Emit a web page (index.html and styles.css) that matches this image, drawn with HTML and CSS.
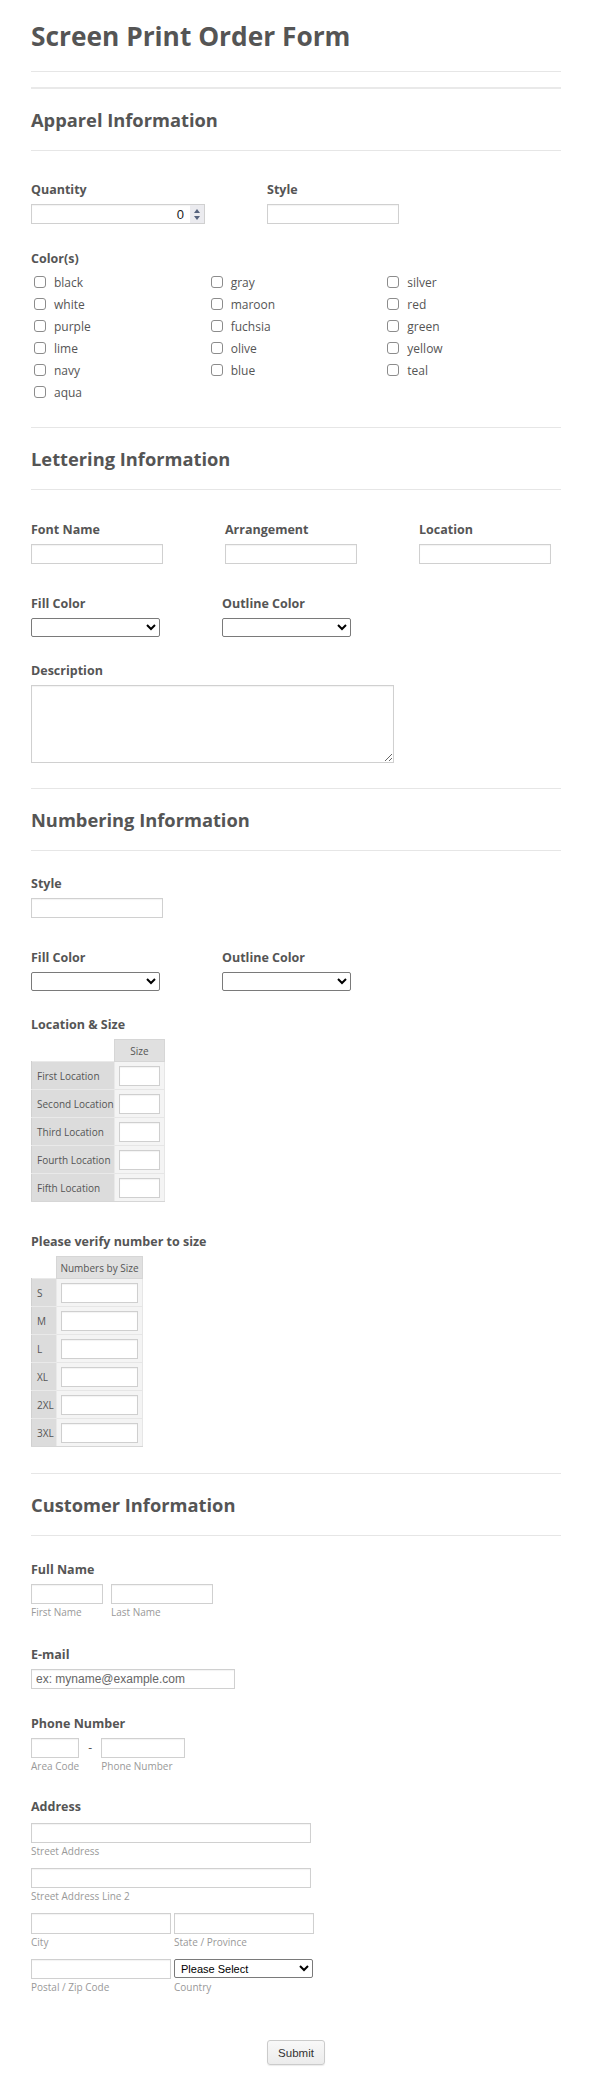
FILE: index.html
```html
<!DOCTYPE html>
<html lang="en">
<head>
<meta charset="utf-8">
<title>Screen Print Order Form</title>
<link rel="stylesheet" href="styles.css">
</head>
<body>
<form class="form">
  <h1 class="title">Screen Print Order Form</h1>
  <div class="rule rule-top"></div>
  <div class="rule rule-thick"></div>

  <section class="section">
    <h2 class="sec-title">Apparel Information</h2>
    <div class="rule sec-rule"></div>
    <div class="row row-apparel">
      <div class="field field-qty">
        <label class="lbl">Quantity</label>
        <div class="num">
          <input class="num-val" type="text" value="0">
          <span class="spin"><span class="tri-up"></span><span class="tri-down"></span></span>
        </div>
      </div>
      <div class="field">
        <label class="lbl">Style</label>
        <input class="inp w132" type="text">
      </div>
    </div>
    <div class="field field-colors">
      <label class="lbl">Color(s)</label>
      <div class="checks">
        <label class="check"><input type="checkbox" class="cb"><span>black</span></label>
        <label class="check"><input type="checkbox" class="cb"><span>gray</span></label>
        <label class="check"><input type="checkbox" class="cb"><span>silver</span></label>
        <label class="check"><input type="checkbox" class="cb"><span>white</span></label>
        <label class="check"><input type="checkbox" class="cb"><span>maroon</span></label>
        <label class="check"><input type="checkbox" class="cb"><span>red</span></label>
        <label class="check"><input type="checkbox" class="cb"><span>purple</span></label>
        <label class="check"><input type="checkbox" class="cb"><span>fuchsia</span></label>
        <label class="check"><input type="checkbox" class="cb"><span>green</span></label>
        <label class="check"><input type="checkbox" class="cb"><span>lime</span></label>
        <label class="check"><input type="checkbox" class="cb"><span>olive</span></label>
        <label class="check"><input type="checkbox" class="cb"><span>yellow</span></label>
        <label class="check"><input type="checkbox" class="cb"><span>navy</span></label>
        <label class="check"><input type="checkbox" class="cb"><span>blue</span></label>
        <label class="check"><input type="checkbox" class="cb"><span>teal</span></label>
        <label class="check"><input type="checkbox" class="cb"><span>aqua</span></label>
      </div>
    </div>
  </section>

  <div class="rule rule-sec-end1"></div>

  <section class="section">
    <h2 class="sec-title">Lettering Information</h2>
    <div class="rule sec-rule"></div>
    <div class="row row-three">
      <div class="field"><label class="lbl">Font Name</label><input class="inp w132" type="text"></div>
      <div class="field"><label class="lbl">Arrangement</label><input class="inp w132" type="text"></div>
      <div class="field"><label class="lbl">Location</label><input class="inp w132" type="text"></div>
    </div>
    <div class="row row-two row-fill1">
      <div class="field"><label class="lbl">Fill Color</label><select class="sel"><option></option></select></div>
      <div class="field"><label class="lbl">Outline Color</label><select class="sel"><option></option></select></div>
    </div>
    <div class="field field-desc">
      <label class="lbl">Description</label>
      <textarea class="area"></textarea>
    </div>
  </section>

  <div class="rule rule-sec-end2"></div>

  <section class="section">
    <h2 class="sec-title">Numbering Information</h2>
    <div class="rule sec-rule"></div>
    <div class="field field-style2">
      <label class="lbl">Style</label>
      <input class="inp w132" type="text">
    </div>
    <div class="row row-two row-fill2">
      <div class="field"><label class="lbl">Fill Color</label><select class="sel"><option></option></select></div>
      <div class="field"><label class="lbl">Outline Color</label><select class="sel"><option></option></select></div>
    </div>
    <div class="field field-locsize">
      <label class="lbl">Location &amp; Size</label>
      <table class="matrix matrix-loc">
        <colgroup><col class="c-head"><col class="c-val"></colgroup>
        <thead><tr><th class="corner"></th><th class="colh">Size</th></tr></thead>
        <tbody>
          <tr><th class="rowh">First Location</th><td class="cell"><input class="cell-inp" type="text"></td></tr>
          <tr><th class="rowh">Second Location</th><td class="cell"><input class="cell-inp" type="text"></td></tr>
          <tr><th class="rowh">Third Location</th><td class="cell"><input class="cell-inp" type="text"></td></tr>
          <tr><th class="rowh">Fourth Location</th><td class="cell"><input class="cell-inp" type="text"></td></tr>
          <tr><th class="rowh">Fifth Location</th><td class="cell"><input class="cell-inp" type="text"></td></tr>
        </tbody>
      </table>
    </div>
    <div class="field field-verify">
      <label class="lbl">Please verify number to size</label>
      <table class="matrix matrix-size">
        <colgroup><col class="c-head"><col class="c-val"></colgroup>
        <thead><tr><th class="corner"></th><th class="colh">Numbers by Size</th></tr></thead>
        <tbody>
          <tr><th class="rowh">S</th><td class="cell"><input class="cell-inp" type="text"></td></tr>
          <tr><th class="rowh">M</th><td class="cell"><input class="cell-inp" type="text"></td></tr>
          <tr><th class="rowh">L</th><td class="cell"><input class="cell-inp" type="text"></td></tr>
          <tr><th class="rowh">XL</th><td class="cell"><input class="cell-inp" type="text"></td></tr>
          <tr><th class="rowh">2XL</th><td class="cell"><input class="cell-inp" type="text"></td></tr>
          <tr><th class="rowh">3XL</th><td class="cell"><input class="cell-inp" type="text"></td></tr>
        </tbody>
      </table>
    </div>
  </section>

  <div class="rule rule-sec-end3"></div>

  <section class="section">
    <h2 class="sec-title">Customer Information</h2>
    <div class="rule sec-rule"></div>

    <div class="field field-name">
      <label class="lbl">Full Name</label>
      <div class="subrow gap8">
        <div class="sub"><input class="inp w72" type="text"><span class="sublbl">First Name</span></div>
        <div class="sub"><input class="inp w102" type="text"><span class="sublbl">Last Name</span></div>
      </div>
    </div>

    <div class="field field-email">
      <label class="lbl">E-mail</label>
      <input class="inp w204 email" type="email" placeholder="ex: myname@example.com">
    </div>

    <div class="field field-phone">
      <label class="lbl">Phone Number</label>
      <div class="subrow">
        <div class="sub"><input class="inp w48" type="text"><span class="sublbl">Area Code</span></div>
        <span class="dash">-</span>
        <div class="sub"><input class="inp w84" type="text"><span class="sublbl">Phone Number</span></div>
      </div>
    </div>

    <div class="field field-address">
      <label class="lbl">Address</label>
      <div class="sub"><input class="inp w280" type="text"><span class="sublbl">Street Address</span></div>
      <div class="sub addr-next"><input class="inp w280" type="text"><span class="sublbl">Street Address Line 2</span></div>
      <div class="subrow gap3 addr-next">
        <div class="sub"><input class="inp w140 h21" type="text"><span class="sublbl">City</span></div>
        <div class="sub"><input class="inp w140 h21" type="text"><span class="sublbl">State / Province</span></div>
      </div>
      <div class="subrow gap3 addr-next">
        <div class="sub"><input class="inp w140" type="text"><span class="sublbl">Postal / Zip Code</span></div>
        <div class="sub"><select class="sel sel-country"><option>Please Select</option></select><span class="sublbl sublbl-country">Country</span></div>
      </div>
    </div>

    <div class="actions">
      <button type="button" class="submit">Submit</button>
    </div>
  </section>
</form>
</body>
</html>
```

FILE: styles.css
```css
* { box-sizing: border-box; }

body {
  margin: 0;
  background: #fff;
  font-family: "Open Sans", "Noto Sans", sans-serif;
  color: #555;
}

.form {
  padding: 20px 31px 25px;
}

.title {
  margin: 0;
  font-size: 26.3px;
  line-height: 32px;
  font-weight: 700;
  color: #555;
}

.rule { height: 1px; background: #e6e6e6; }
.rule-top { margin-top: 19px; }
.rule-thick { height: 2px; margin-top: 15px; background: #e9e9e9; }
.rule-sec-end1 { margin-top: 24px; }
.rule-sec-end2 { margin-top: 25px; }
.rule-sec-end3 { margin-top: 26px; }

.sec-title {
  margin: 20px 0 0;
  font-size: 18.3px;
  line-height: 22px;
  font-weight: 700;
  color: #555;
}
.sec-rule { margin-top: 19px; }

.lbl {
  display: block;
  font-size: 12.5px;
  line-height: 16px;
  font-weight: 700;
  color: #555;
  margin-bottom: 6px;
}

.row { display: flex; }
.row-apparel { margin-top: 31px; }
.field-qty { width: 236px; }
.row-three { margin-top: 32px; gap: 62px; }
.row-two { gap: 62px; }
.row-fill1 { margin-top: 32px; }
.field-desc { margin-top: 26px; }

.field-colors { margin-top: 27px; }
.field-colors .lbl { margin-bottom: 4px; }

.field-style2 { margin-top: 25px; }
.row-fill2 { margin-top: 32px; }
.field-locsize { margin-top: 26px; }
.field-verify { margin-top: 32px; }

.field-name { margin-top: 26px; }
.field-email { margin-top: 29px; }
.field-phone { margin-top: 27px; }
.field-address { margin-top: 27px; }
.field-address .lbl { margin-bottom: 8px; }

/* inputs */
.inp {
  display: block;
  height: 20px;
  border: 1px solid #d0d0d0;
  background: #fff;
  box-shadow: inset 0 1px 1px rgba(0,0,0,0.05);
  padding: 0 4px;
  font-family: "Liberation Sans", Arial, sans-serif;
  font-size: 12px;
  color: #333;
  outline: none;
}
.h21 { height: 21px; }
.w48 { width: 48px; }
.w72 { width: 72px; }
.w84 { width: 84px; }
.w102 { width: 102px; }
.w132 { width: 132px; }
.w140 { width: 140px; }
.w204 { width: 204px; }
.w280 { width: 280px; }

.email::placeholder { color: #666; }

.num {
  display: flex;
  width: 174px;
  height: 20px;
  border: 1px solid #d0d0d0;
  background: #fff;
  box-shadow: inset 0 1px 1px rgba(0,0,0,0.05);
}
.num-val {
  flex: 1;
  min-width: 0;
  border: 0;
  background: transparent;
  text-align: right;
  padding: 0 6px 0 0;
  font-family: "Liberation Sans", Arial, sans-serif;
  font-size: 13px;
  color: #222;
  outline: none;
}
.spin {
  width: 14px;
  background: #ebebef;
  display: flex;
  flex-direction: column;
  align-items: center;
  justify-content: center;
  gap: 3px;
}
.tri-up {
  width: 0; height: 0;
  border-left: 3px solid transparent;
  border-right: 3px solid transparent;
  border-bottom: 4px solid #56637d;
}
.tri-down {
  width: 0; height: 0;
  border-left: 3px solid transparent;
  border-right: 3px solid transparent;
  border-top: 4px solid #56637d;
}

.sel {
  display: block;
  width: 129px;
  height: 19px;
  font-family: "Liberation Sans", Arial, sans-serif;
  font-size: 10.5px;
  color: #000;
  background: #fff;
  border: 1px solid #7a7a7a;
  border-radius: 2px;
  padding: 0 2px;
}
.sel-country { width: 139px; font-size: 11px; }

.area {
  display: block;
  width: 363px;
  height: 78px;
  border: 1px solid #d0d0d0;
  box-shadow: inset 0 1px 1px rgba(0,0,0,0.05);
  resize: both;
  outline: none;
}

/* checkboxes */
.checks {
  display: grid;
  grid-template-columns: repeat(3, 1fr);
  grid-auto-rows: 22px;
}
.check {
  display: flex;
  align-items: center;
  font-size: 12px;
  color: #555;
}
.cb {
  appearance: none;
  -webkit-appearance: none;
  flex: none;
  width: 12px;
  height: 12px;
  margin: 0 8px 0 3px;
  border: 1px solid #8c8c8c;
  border-radius: 3px;
  background: #fff;
}

/* matrix tables */
.matrix {
  border-collapse: collapse;
  table-layout: fixed;
  font-size: 10px;
  color: #555;
}
.matrix-loc { width: 133px; }
.matrix-loc .c-head { width: 83px; }
.matrix-loc .c-val { width: 50px; }
.matrix-size { width: 111px; }
.matrix-size .c-head { width: 25px; }
.matrix-size .c-val { width: 86px; }

.matrix th, .matrix td { padding: 0; }
.matrix thead tr { height: 22px; }
.matrix tbody tr { height: 28px; }
.corner { background: transparent; border: 0; }
.colh {
  background: #e0e0e0;
  border: 1px solid #d6d6d6;
  font-weight: 400;
  text-align: center;
  white-space: nowrap;
}
.matrix .rowh {
  background: #dcdcdc;
  border: 1px solid #e9e9e9;
  border-left-color: #d0d0d0;
  font-weight: 400;
  text-align: left;
  padding-left: 5px;
  white-space: nowrap;
  overflow: hidden;
}
.matrix .cell {
  background: #f4f4f4;
  border: 1px solid #e6e6e6;
  padding: 0 4px;
}
.cell-inp {
  display: block;
  width: 100%;
  height: 20px;
  border: 1px solid #cfcfcf;
  background: #fff;
  box-shadow: inset 0 1px 1px rgba(0,0,0,0.05);
  outline: none;
}
.matrix tbody tr:last-child th,
.matrix tbody tr:last-child td { border-bottom-color: #d6d6d6; }

/* sub labelled inputs */
.subrow { display: flex; align-items: flex-start; }
.gap8 { gap: 8px; }
.gap3 { gap: 3px; }
.sub { display: flex; flex-direction: column; }
.sublbl {
  margin-top: 2px;
  font-size: 10px;
  line-height: 12px;
  color: #999;
  white-space: nowrap;
}
.sublbl-country { margin-top: 3px; }
.dash {
  width: 22px;
  text-align: center;
  line-height: 20px;
  font-size: 12px;
  color: #555;
}
.addr-next { margin-top: 11px; }

.actions {
  display: flex;
  justify-content: center;
  margin-top: 47px;
}
.submit {
  width: 58px;
  height: 25px;
  padding: 0;
  font-family: "Liberation Sans", Arial, sans-serif;
  font-size: 11.5px;
  color: #333;
  background: linear-gradient(#f8f8f8, #ececec);
  border: 1px solid #cbcbcb;
  border-radius: 3px;
  box-shadow: 0 1px 1px rgba(0,0,0,0.08);
}
```
